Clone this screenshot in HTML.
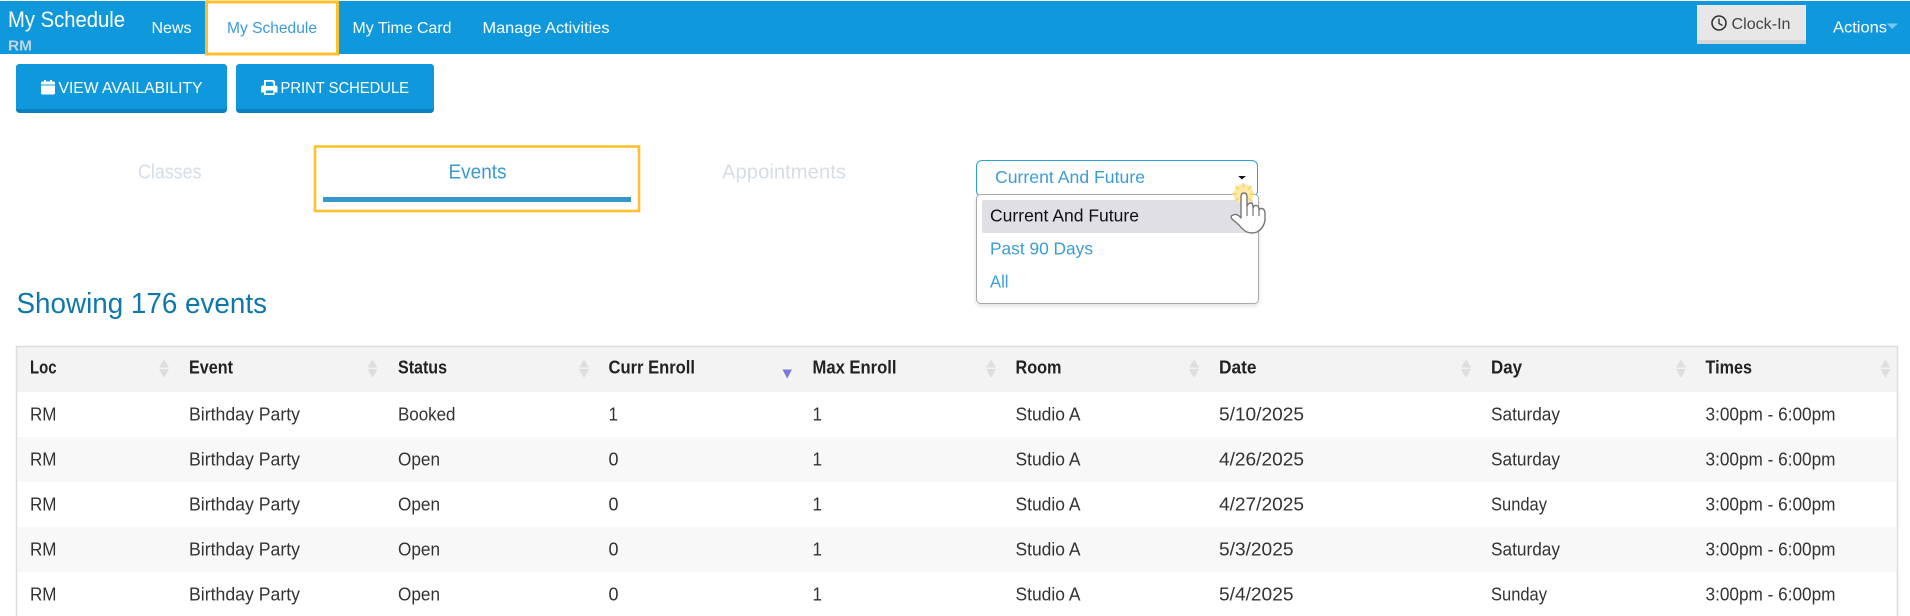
<!DOCTYPE html>
<html lang="en">
<head>
<meta charset="utf-8">
<title>My Schedule</title>
<style>
html,body{margin:0;padding:0;background:#fff;width:1910px;height:616px;overflow:hidden}
svg{display:block;position:absolute;left:0;top:0}
text{font-family:"Liberation Sans",Arial,sans-serif;white-space:pre}
.td{font-size:18px;fill:#333}
.th{font-size:18px;font-weight:700;fill:#222}
.nav{font-size:16px;fill:#fff}
.btn{font-size:16px;fill:#fff}
.tab{font-size:20.5px}
.dd{font-size:17.5px;fill:#3b9dd6}
</style>
</head>
<body>
<svg width="1910" height="616" viewBox="0 0 1910 616" xmlns="http://www.w3.org/2000/svg">
<rect width="1910" height="616" fill="#fff"/>

<!-- navbar -->
<rect x="0" y="1" width="1910" height="53" fill="#1098dc"/>
<text x="8" y="27" font-size="22" fill="#fff" textLength="117" lengthAdjust="spacingAndGlyphs">My Schedule</text>
<text x="8" y="50.500" font-size="15" font-weight="700" fill="#c5d3dd" textLength="24" lengthAdjust="spacingAndGlyphs">RM</text>
<text class="nav" x="151.500" y="33" textLength="40" lengthAdjust="spacingAndGlyphs">News</text>
<rect x="206.500" y="2" width="131" height="52" fill="#fff" stroke="#fdc02f" stroke-width="3"/>
<text class="nav" x="227" y="33" style="fill:#3a9ad9" textLength="90" lengthAdjust="spacingAndGlyphs">My Schedule</text>
<text class="nav" x="352.500" y="33" textLength="99" lengthAdjust="spacingAndGlyphs">My Time Card</text>
<text class="nav" x="482.500" y="33" textLength="127" lengthAdjust="spacingAndGlyphs">Manage Activities</text>

<!-- clock in -->
<rect x="1697" y="5" width="109" height="39" fill="#e7e7e7"/>
<rect x="1697" y="40" width="109" height="4" fill="#d6d6d6"/>
<circle cx="1719" cy="23" r="7" fill="none" stroke="#333" stroke-width="1.600"/>
<path d="M1719 18.500V23.500L1722.500 25.500" fill="none" stroke="#333" stroke-width="1.400"/>
<text x="1731.500" y="29" font-size="16" fill="#444" textLength="59" lengthAdjust="spacingAndGlyphs">Clock-In</text>
<text class="nav" x="1833" y="32.500" textLength="54" lengthAdjust="spacingAndGlyphs">Actions</text>
<path d="M1886.500 23.500H1898L1892.200 29Z" fill="#7cc4ee"/>

<!-- buttons -->
<rect x="16" y="64" width="211" height="49" rx="3.500" fill="#0b80bd"/>
<path d="M16 67.500a3.500 3.500 0 0 1 3.500-3.500H223.500a3.500 3.500 0 0 1 3.500 3.500V109H16Z" fill="#1098dc"/>
<path d="M41 85.500H55V93a1.500 1.500 0 0 1-1.500 1.500h-11A1.500 1.500 0 0 1 41 93ZM42.500 81.500h1.500V80h2v1.500h4V80h2v1.500h1.500A1.500 1.500 0 0 1 55 83v1.500H41V83a1.500 1.500 0 0 1 1.500-1.500Z" fill="#fff"/>
<text class="btn" x="58.500" y="93" textLength="144" lengthAdjust="spacingAndGlyphs">VIEW AVAILABILITY</text>

<rect x="236" y="64" width="198" height="49" rx="3.500" fill="#0b80bd"/>
<path d="M236 67.500a3.500 3.500 0 0 1 3.500-3.500H430.500a3.500 3.500 0 0 1 3.500 3.500V109H236Z" fill="#1098dc"/>
<path fill-rule="evenodd" d="M264 80h9.500l1.500 1.500V85.500h.5a2 2 0 0 1 2 2V92.500h-3V95H264V92.500h-3V87.500a2 2 0 0 1 2-2h1ZM265.800 81.700V86h7.500V82.500h-1V81.700ZM265.800 90.500V93.300h7.500V90.500Z" fill="#fff"/>
<text class="btn" x="280.500" y="93" textLength="128.500" lengthAdjust="spacingAndGlyphs">PRINT SCHEDULE</text>

<!-- tabs -->
<text class="tab" x="138" y="178.500" fill="#d5dee5" textLength="63.500" lengthAdjust="spacingAndGlyphs">Classes</text>
<rect x="315" y="146.500" width="324" height="64.500" fill="#fff" stroke="#fdc02f" stroke-width="2.600"/>
<text class="tab" x="448.500" y="178.500" fill="#3a9ad0" textLength="58" lengthAdjust="spacingAndGlyphs">Events</text>
<rect x="323" y="197" width="308" height="5" fill="#3498cc"/>
<text class="tab" x="722" y="178.500" fill="#d5dee5" textLength="124" lengthAdjust="spacingAndGlyphs">Appointments</text>

<!-- heading -->
<text x="16.500" y="313" font-size="29" fill="#0f78ab" textLength="250.500" lengthAdjust="spacingAndGlyphs">Showing 176 events</text>

<!-- table frame -->
<rect x="17" y="347" width="1881" height="45" fill="#f3f3f3"/>
<rect x="17" y="437" width="1881" height="45" fill="#f8f8f8"/>
<rect x="17" y="527" width="1881" height="45" fill="#f8f8f8"/>
<path d="M16.500 616V346.500H1897.500V616" fill="none" stroke="#ddd" stroke-width="1.500"/>

<!-- table header -->
<g transform="translate(0 -.5)">
<text class="th" x="30" y="374" textLength="26.500" lengthAdjust="spacingAndGlyphs">Loc</text>
<text class="th" x="189" y="374" textLength="44" lengthAdjust="spacingAndGlyphs">Event</text>
<text class="th" x="398" y="374" textLength="49" lengthAdjust="spacingAndGlyphs">Status</text>
<text class="th" x="608.500" y="374" textLength="86.500" lengthAdjust="spacingAndGlyphs">Curr Enroll</text>
<text class="th" x="812.500" y="374" textLength="84" lengthAdjust="spacingAndGlyphs">Max Enroll</text>
<text class="th" x="1015.500" y="374" textLength="46" lengthAdjust="spacingAndGlyphs">Room</text>
<text class="th" x="1219" y="374" textLength="37.500" lengthAdjust="spacingAndGlyphs">Date</text>
<text class="th" x="1491" y="374" textLength="31" lengthAdjust="spacingAndGlyphs">Day</text>
<text class="th" x="1705.500" y="374" textLength="46.500" lengthAdjust="spacingAndGlyphs">Times</text>
</g>
<!-- sort icons -->
<g fill="#dedede">
<path d="M159 367.500L164 359.500L169 367.500ZM159 369L169 369L164 378Z"/>
<path d="M367.500 367.500L372.500 359.500L377.500 367.500ZM367.500 369L377.500 369L372.500 378Z"/>
<path d="M579 367.500L584 359.500L589 367.500ZM579 369L589 369L584 378Z"/>
<path d="M986 367.500L991 359.500L996 367.500ZM986 369L996 369L991 378Z"/>
<path d="M1189 367.500L1194 359.500L1199 367.500ZM1189 369L1199 369L1194 378Z"/>
<path d="M1461 367.500L1466 359.500L1471 367.500ZM1461 369L1471 369L1466 378Z"/>
<path d="M1676 367.500L1681 359.500L1686 367.500ZM1676 369L1686 369L1681 378Z"/>
<path d="M1880.500 367.500L1885.500 359.500L1890.500 367.500ZM1880.500 369L1890.500 369L1885.500 378Z"/>
</g>
<path d="M782.500 369.500H792L787.200 378.500Z" fill="#7a7ad8"/>

<g transform="translate(0 -.6)">
<!-- row 1 -->
<text class="td" x="30" y="421" textLength="26.500" lengthAdjust="spacingAndGlyphs">RM</text>
<text class="td" x="189" y="421" textLength="111" lengthAdjust="spacingAndGlyphs">Birthday Party</text>
<text class="td" x="398" y="421" textLength="57.500" lengthAdjust="spacingAndGlyphs">Booked</text>
<text class="td" x="608.500" y="421" textLength="9.500" lengthAdjust="spacingAndGlyphs">1</text>
<text class="td" x="812.500" y="421" textLength="9.500" lengthAdjust="spacingAndGlyphs">1</text>
<text class="td" x="1015.500" y="421" textLength="65" lengthAdjust="spacingAndGlyphs">Studio A</text>
<text class="td" x="1219" y="421" textLength="85" lengthAdjust="spacingAndGlyphs">5/10/2025</text>
<text class="td" x="1491" y="421" textLength="69" lengthAdjust="spacingAndGlyphs">Saturday</text>
<text class="td" x="1705.500" y="421" textLength="130" lengthAdjust="spacingAndGlyphs">3:00pm - 6:00pm</text>
<!-- row 2 -->
<text class="td" x="30" y="466" textLength="26.500" lengthAdjust="spacingAndGlyphs">RM</text>
<text class="td" x="189" y="466" textLength="111" lengthAdjust="spacingAndGlyphs">Birthday Party</text>
<text class="td" x="398" y="466" textLength="42" lengthAdjust="spacingAndGlyphs">Open</text>
<text class="td" x="608.500" y="466" textLength="10" lengthAdjust="spacingAndGlyphs">0</text>
<text class="td" x="812.500" y="466" textLength="9.500" lengthAdjust="spacingAndGlyphs">1</text>
<text class="td" x="1015.500" y="466" textLength="65" lengthAdjust="spacingAndGlyphs">Studio A</text>
<text class="td" x="1219" y="466" textLength="85" lengthAdjust="spacingAndGlyphs">4/26/2025</text>
<text class="td" x="1491" y="466" textLength="69" lengthAdjust="spacingAndGlyphs">Saturday</text>
<text class="td" x="1705.500" y="466" textLength="130" lengthAdjust="spacingAndGlyphs">3:00pm - 6:00pm</text>
<!-- row 3 -->
<text class="td" x="30" y="511" textLength="26.500" lengthAdjust="spacingAndGlyphs">RM</text>
<text class="td" x="189" y="511" textLength="111" lengthAdjust="spacingAndGlyphs">Birthday Party</text>
<text class="td" x="398" y="511" textLength="42" lengthAdjust="spacingAndGlyphs">Open</text>
<text class="td" x="608.500" y="511" textLength="10" lengthAdjust="spacingAndGlyphs">0</text>
<text class="td" x="812.500" y="511" textLength="9.500" lengthAdjust="spacingAndGlyphs">1</text>
<text class="td" x="1015.500" y="511" textLength="65" lengthAdjust="spacingAndGlyphs">Studio A</text>
<text class="td" x="1219" y="511" textLength="85" lengthAdjust="spacingAndGlyphs">4/27/2025</text>
<text class="td" x="1491" y="511" textLength="56" lengthAdjust="spacingAndGlyphs">Sunday</text>
<text class="td" x="1705.500" y="511" textLength="130" lengthAdjust="spacingAndGlyphs">3:00pm - 6:00pm</text>
<!-- row 4 -->
<text class="td" x="30" y="556" textLength="26.500" lengthAdjust="spacingAndGlyphs">RM</text>
<text class="td" x="189" y="556" textLength="111" lengthAdjust="spacingAndGlyphs">Birthday Party</text>
<text class="td" x="398" y="556" textLength="42" lengthAdjust="spacingAndGlyphs">Open</text>
<text class="td" x="608.500" y="556" textLength="10" lengthAdjust="spacingAndGlyphs">0</text>
<text class="td" x="812.500" y="556" textLength="9.500" lengthAdjust="spacingAndGlyphs">1</text>
<text class="td" x="1015.500" y="556" textLength="65" lengthAdjust="spacingAndGlyphs">Studio A</text>
<text class="td" x="1219" y="556" textLength="74.500" lengthAdjust="spacingAndGlyphs">5/3/2025</text>
<text class="td" x="1491" y="556" textLength="69" lengthAdjust="spacingAndGlyphs">Saturday</text>
<text class="td" x="1705.500" y="556" textLength="130" lengthAdjust="spacingAndGlyphs">3:00pm - 6:00pm</text>
<!-- row 5 -->
<text class="td" x="30" y="601" textLength="26.500" lengthAdjust="spacingAndGlyphs">RM</text>
<text class="td" x="189" y="601" textLength="111" lengthAdjust="spacingAndGlyphs">Birthday Party</text>
<text class="td" x="398" y="601" textLength="42" lengthAdjust="spacingAndGlyphs">Open</text>
<text class="td" x="608.500" y="601" textLength="10" lengthAdjust="spacingAndGlyphs">0</text>
<text class="td" x="812.500" y="601" textLength="9.500" lengthAdjust="spacingAndGlyphs">1</text>
<text class="td" x="1015.500" y="601" textLength="65" lengthAdjust="spacingAndGlyphs">Studio A</text>
<text class="td" x="1219" y="601" textLength="74.500" lengthAdjust="spacingAndGlyphs">5/4/2025</text>
<text class="td" x="1491" y="601" textLength="56" lengthAdjust="spacingAndGlyphs">Sunday</text>
<text class="td" x="1705.500" y="601" textLength="130" lengthAdjust="spacingAndGlyphs">3:00pm - 6:00pm</text>
</g>

<!-- dropdown -->
<defs><filter id="sh" x="-5%" y="-10%" width="110%" height="125%"><feDropShadow dx="0" dy="2" stdDeviation="2" flood-color="#000" flood-opacity=".12"/></filter></defs>
<rect x="976.500" y="160.500" width="281" height="36" rx="5.500" fill="#fff" stroke="#2f9fd6"/>
<text class="dd" x="995" y="183" textLength="150" lengthAdjust="spacingAndGlyphs">Current And Future</text>
<path d="M1238.200 176H1245.800L1242 179.500Z" fill="#111"/>
<rect x="976.500" y="194.500" width="282" height="109" rx="4" fill="#fff" stroke="#aaa" filter="url(#sh)"/>
<rect x="982" y="200" width="271" height="33" rx="2" fill="#e0dfe5"/>
<text x="990" y="221.500" font-size="17.400" fill="#111" textLength="149" lengthAdjust="spacingAndGlyphs">Current And Future</text>
<text x="990" y="254.500" font-size="17.400" fill="#3b9dd6" textLength="103" lengthAdjust="spacingAndGlyphs">Past 90 Days</text>
<text x="990" y="287.500" font-size="17.400" fill="#3b9dd6" textLength="18.500" lengthAdjust="spacingAndGlyphs">All</text>

<!-- hand cursor -->
<g transform="translate(1210 170)">
<circle cx="33.500" cy="24" r="10" fill="#fdeaa8"/>
<g stroke="#fbd35c" stroke-width="1.600" fill="none" stroke-linecap="round">
<path d="M33.500 13.500V17M26 16.500L28.500 19M41 16.500L38.500 19M23 24H26.500M44 24H40.500M25.500 30.500L28 28.500M41.500 30.500L39 28.500"/>
</g>
<path d="M31 42L31 27Q31 23 34 23Q37 23 37 27L37 36Q38 33 41 33Q43 33 43 37L43 38Q44 35 46.500 35.500Q49 36 49 40Q50 38 52 38.500Q55 39 55 44L55 50Q54 58 47 62Q42 64 37 62Q33 60 29 55L22 49Q20 46 23 45Q27 43 31 48Z" fill="#fff" stroke="#777" stroke-width="1.400" stroke-linejoin="round"/>
<path d="M37 36V46M43 38V46M49 40V46" fill="none" stroke="#777" stroke-width="1.200"/>
</g>
</svg>
</body>
</html>
